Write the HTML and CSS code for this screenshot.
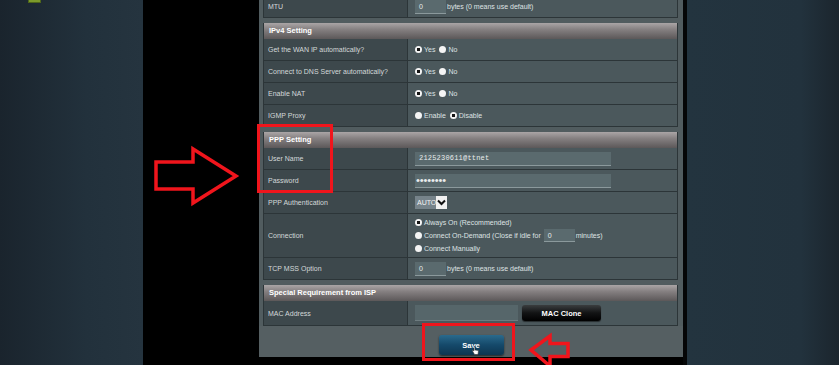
FILE: index.html
```html
<!DOCTYPE html>
<html lang="en">

<head>
    <meta charset="UTF-8">
    <meta name="viewport" content="width=device-width, initial-scale=1.0">
    <title>WAN - Internet Connection</title>
    <link rel="stylesheet" href="styles.css">
</head>

<body>
    <div class="screen">
        <div class="side side-left">
            <span class="logo-bit"></span>
        </div>
        <div class="black-gap"></div>

        <div class="panel">
            <div class="sect sect-first">
                <div class="row">
                    <div class="lbl">MTU</div>
                    <div class="val"><span class="field field-short">0</span>bytes (0 means use default)</div>
                </div>
            </div>

            <div class="sect">
                <div class="sect-head">IPv4 Setting</div>
                <div class="row">
                    <div class="lbl">Get the WAN IP automatically?</div>
                    <div class="val">
                        <span class="opt"><span class="radio on"></span>Yes</span>
                        <span class="opt"><span class="radio"></span>No</span>
                    </div>
                </div>
                <div class="row">
                    <div class="lbl">Connect to DNS Server automatically?</div>
                    <div class="val">
                        <span class="opt"><span class="radio on"></span>Yes</span>
                        <span class="opt"><span class="radio"></span>No</span>
                    </div>
                </div>
                <div class="row">
                    <div class="lbl">Enable NAT</div>
                    <div class="val">
                        <span class="opt"><span class="radio on"></span>Yes</span>
                        <span class="opt"><span class="radio"></span>No</span>
                    </div>
                </div>
                <div class="row">
                    <div class="lbl">IGMP Proxy</div>
                    <div class="val">
                        <span class="opt"><span class="radio"></span>Enable</span>
                        <span class="opt"><span class="radio on"></span>Disable</span>
                    </div>
                </div>
            </div>

            <div class="sect">
                <div class="sect-head">PPP Setting</div>
                <div class="row">
                    <div class="lbl">User Name</div>
                    <div class="val"><span class="field field-long mono">2125230611@ttnet</span></div>
                </div>
                <div class="row">
                    <div class="lbl">Password</div>
                    <div class="val"><span class="field field-long dots">&#8226;&#8226;&#8226;&#8226;&#8226;&#8226;&#8226;&#8226;</span></div>
                </div>
                <div class="row">
                    <div class="lbl">PPP Authentication</div>
                    <div class="val">
                        <span class="select">
                            <span class="select-text">AUTO</span>
                            <span class="select-arrow">
                                <svg width="9" height="7" viewBox="0 0 9 7">
                                    <path d="M1 1.5 L4.5 5 L8 1.5" fill="none" stroke="#111" stroke-width="2"/>
                                </svg>
                            </span>
                        </span>
                    </div>
                </div>
                <div class="row row-tall">
                    <div class="lbl">Connection</div>
                    <div class="val val-list">
                        <span class="opt"><span class="radio on"></span>Always On (Recommended)</span>
                        <span class="opt"><span class="radio"></span>Connect On-Demand (Close if idle for <span class="field field-tiny">0</span>minutes)</span>
                        <span class="opt"><span class="radio"></span>Connect Manually</span>
                    </div>
                </div>
                <div class="row">
                    <div class="lbl">TCP MSS Option</div>
                    <div class="val"><span class="field field-short">0</span>bytes (0 means use default)</div>
                </div>
            </div>

            <div class="sect">
                <div class="sect-head">Special Requirement from ISP</div>
                <div class="row row-mac">
                    <div class="lbl">MAC Address</div>
                    <div class="val">
                        <span class="field field-mac"></span>
                        <button class="btn-dark">MAC Clone</button>
                    </div>
                </div>
            </div>

            <div class="save-bar">
                <button class="btn-save">Save
                    <svg class="hand" width="7" height="9" viewBox="0 0 7 9">
                        <path d="M2 0.5 V5 L1 4 L0.5 5 L2.5 8.5 H6 L6.5 4.5 L3 4 V0.5 Z" fill="#fff" stroke="#333" stroke-width="0.6"/>
                    </svg>
                </button>
            </div>
        </div>

        <div class="panel-edge"></div>
        <div class="side side-right"></div>
    </div>

    <svg class="marks" width="839" height="365" viewBox="0 0 839 365">
        <rect x="258.5" y="125.5" width="73" height="66" fill="none" stroke="#f0151c" stroke-width="3"/>
        <rect x="423.5" y="324.5" width="90" height="35" fill="none" stroke="#f0151c" stroke-width="3"/>
        <path d="M156 162 H193 V149 L236 176 L193 203 V189 H156 Z" fill="none" stroke="#f0151c" stroke-width="3.5" stroke-linejoin="miter"/>
        <path d="M531 350 L550 336 V343.5 H568 V356.5 H550 V366 Z" fill="none" stroke="#f0151c" stroke-width="3.5"/>
    </svg>
</body>

</html>
```

FILE: styles.css
```css
* {
    box-sizing: border-box;
}

body {
    margin: 0;
    background-color: #000;
    font-family: "Liberation Sans", Arial, sans-serif;
}

.screen {
    display: flex;
    width: 839px;
    height: 365px;
    overflow: hidden;
}

.side-left {
    width: 143px;
    background: linear-gradient(to right, #1a242d, #22313c 60%, #25343f);
}

.logo-bit {
    display: block;
    margin-left: 28px;
    width: 13px;
    height: 3px;
    background-color: #7c9a2b;
    border: 1px solid #4d6519;
    border-top: none;
}

.black-gap {
    width: 116px;
    background-color: #000;
}

.panel {
    width: 424px;
    height: 357px;
    padding: 0 5px 0 4px;
    background-color: #515c5f;
}

.panel-edge {
    width: 4px;
    background-color: #050607;
}

.side-right {
    flex: 1;
    background: linear-gradient(to right, #23343f, #22323d 75%, #1b252d);
}

/* sections */

.sect {
    margin-top: 5px;
    border-left: 1px solid #2c3538;
    border-right: 1px solid #2c3538;
}

.sect-first {
    margin-top: -4px;
}

.sect-head {
    height: 16px;
    padding-left: 5px;
    line-height: 16px;
    font-size: 7.5px;
    font-weight: bold;
    color: #fff;
    background: linear-gradient(#aaa5a6, #858081 40%, #5c5859);
    box-shadow: 0 1px 0 #2c3538;
}

.row {
    display: grid;
    grid-template-columns: 144px 1fr;
    height: 22px;
    border-bottom: 1px solid #2c3538;
}

.row-tall {
    height: 44px;
}

.row-mac {
    height: 25px;
}

.lbl {
    display: flex;
    align-items: center;
    padding-left: 4px;
    font-size: 7px;
    color: #d3d8d9;
    background-color: #3d484c;
    border-right: 1px solid #2c3538;
}

.val {
    display: flex;
    align-items: center;
    padding-left: 7px;
    font-size: 7px;
    color: #dfe3e4;
    background-color: #4b585c;
}

.val-list {
    flex-direction: column;
    align-items: flex-start;
    justify-content: center;
    gap: 1px;
}

.val-list .opt {
    height: 12px;
}

.opt {
    display: inline-flex;
    align-items: center;
    margin-right: 4px;
    white-space: nowrap;
}

.radio {
    display: inline-block;
    width: 7px;
    height: 7px;
    margin-right: 2px;
    border-radius: 50%;
    background-color: #f4f4f4;
}

.radio.on {
    background: radial-gradient(circle, #141414 1.6px, #f4f4f4 2px);
}

.field {
    display: inline-block;
    height: 14px;
    padding-left: 4px;
    line-height: 13px;
    font-size: 7px;
    color: #e8ecec;
    background-color: #5a6a6e;
    border-bottom: 1px solid #8b999c;
}

.field-short {
    width: 31px;
    margin-right: 1px;
}

.field-tiny {
    width: 31px;
    height: 13px;
    margin: 0 1px 0 3px;
}

.field-long {
    width: 196px;
}

.field-mac {
    width: 103px;
    height: 16px;
    background-color: #56666a;
    border-bottom-color: #6e7c80;
}

.mono {
    font-family: "Liberation Mono", monospace;
    letter-spacing: 0.2px;
}

.dots {
    padding-left: 1px;
    font-family: "Liberation Sans", sans-serif;
    font-size: 11px;
    letter-spacing: -0.1px;
}

.select {
    display: inline-flex;
    height: 13px;
}

.select-text {
    width: 21px;
    padding-left: 2px;
    line-height: 13px;
    font-size: 7px;
    color: #f2f2f2;
    background-color: #76838a;
}

.select-arrow {
    display: flex;
    align-items: center;
    justify-content: center;
    width: 11px;
    background-color: #f0f0f0;
}

.btn-dark {
    width: 79px;
    height: 16px;
    margin-left: 4px;
    padding: 0;
    border: none;
    border-radius: 3px;
    font-family: "Liberation Sans", Arial, sans-serif;
    font-size: 7.5px;
    font-weight: bold;
    color: #fff;
    background: linear-gradient(#3a3d3f, #121314 50%, #000);
    box-shadow: 0 1px 1px rgba(0, 0, 0, 0.5);
}

/* save */

.save-bar {
    display: flex;
    justify-content: center;
    padding-top: 9px;
    background-color: #555f62;
    height: 31px;
    margin: 0 -5px 0 -4px;
}

.btn-save {
    position: relative;
    width: 65px;
    height: 20px;
    padding: 0;
    border: none;
    border-radius: 3px;
    font-family: "Liberation Sans", Arial, sans-serif;
    font-size: 7.5px;
    font-weight: bold;
    color: #fff;
    background: linear-gradient(#2a6a8d, #15496a 50%, #0d3550);
    box-shadow: 0 1px 2px rgba(0, 0, 0, 0.6);
}

.hand {
    position: absolute;
    left: 33px;
    top: 11px;
}

/* annotations */

.marks {
    position: absolute;
    left: 0;
    top: 0;
    pointer-events: none;
}
```
